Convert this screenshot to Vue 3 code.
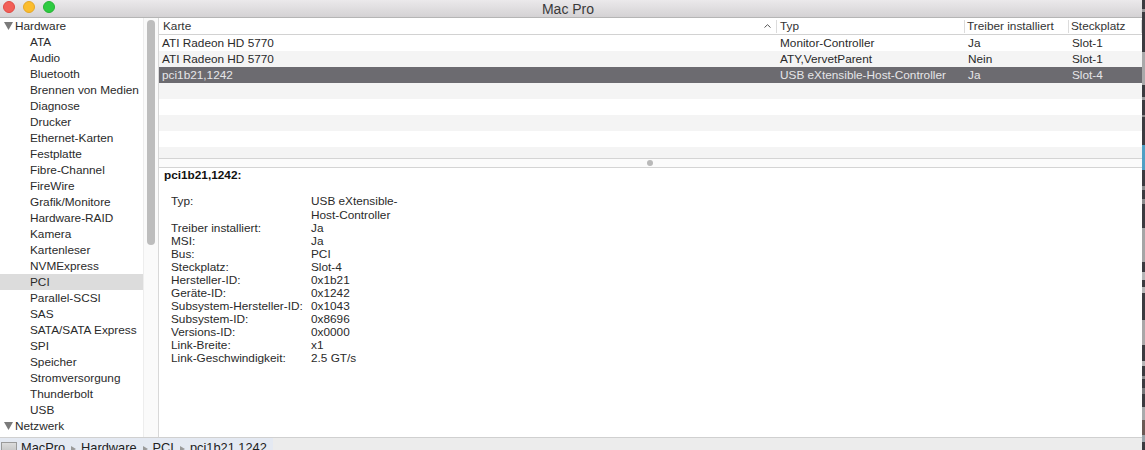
<script setup>
const sidebar = ['ATA','Audio','Bluetooth','Brennen von Medien','Diagnose','Drucker','Ethernet-Karten','Festplatte','Fibre-Channel','FireWire','Grafik/Monitore','Hardware-RAID','Kamera','Kartenleser','NVMExpress','PCI','Parallel-SCSI','SAS','SATA/SATA Express','SPI','Speicher','Stromversorgung','Thunderbolt','USB']
const rows = [
  ['ATI Radeon HD 5770','Monitor-Controller','Ja','Slot-1'],
  ['ATI Radeon HD 5770','ATY,VervetParent','Nein','Slot-1'],
  ['pci1b21,1242','USB eXtensible-Host-Controller','Ja','Slot-4'],
  ['','','',''],['','','',''],['','','',''],['','','',''],['','','','']
]
const details = [
  ['Typ:','USB eXtensible-Host-Controller'],['Treiber installiert:','Ja'],['MSI:','Ja'],['Bus:','PCI'],['Steckplatz:','Slot-4'],
  ['Hersteller-ID:','0x1b21'],['Geräte-ID:','0x1242'],['Subsystem-Hersteller-ID:','0x1043'],['Subsystem-ID:','0x8696'],
  ['Versions-ID:','0x0000'],['Link-Breite:','x1'],['Link-Geschwindigkeit:','2.5 GT/s']
]
const crumbs = ['MacPro','Hardware','PCI','pci1b21,1242']
</script>

<template>
  <div class="screen">
    <div class="window">
      <header class="titlebar">
        <div class="lights">
          <span class="light red"></span><span class="light yellow"></span><span class="light green"></span>
        </div>
        <span class="title">Mac Pro</span>
      </header>
      <div class="main">
        <aside class="sidebar">
          <div class="group"><svg class="tri" viewBox="0 0 9 8"><path d="M0 0H9L4.5 8Z"/></svg>Hardware</div>
          <div v-for="s in sidebar" :key="s" class="item" :class="{ active: s === 'PCI' }">{{ s }}</div>
          <div class="group"><svg class="tri" viewBox="0 0 9 8"><path d="M0 0H9L4.5 8Z"/></svg>Netzwerk</div>
        </aside>
        <div class="gutter"><div class="thumb"></div></div>
        <section class="content">
          <div class="thead">
            <div class="th c1">Karte<svg class="chev" viewBox="0 0 7 4"><path d="M0.5 3.5L3.5 0.7L6.5 3.5" fill="none" stroke="#555" stroke-width="1"/></svg></div>
            <div class="th c2">Typ</div>
            <div class="th c3">Treiber installiert</div>
            <div class="th c4">Steckplatz</div>
          </div>
          <div class="tbody">
            <div v-for="(r, i) in rows" :key="i" class="tr" :class="{ odd: i % 2 === 1, sel: i === 2 }">
              <div class="td c1">{{ r[0] }}</div>
              <div class="td c2">{{ r[1] }}</div>
              <div class="td c3">{{ r[2] }}</div>
              <div class="td c4">{{ r[3] }}</div>
            </div>
          </div>
          <div class="splitter"><span class="dot"></span></div>
          <div class="details">
            <div class="dtitle">pci1b21,1242:</div>
            <div class="dgrid">
              <template v-for="d in details" :key="d[0]">
                <div class="dl">{{ d[0] }}</div>
                <div class="dv">{{ d[1] }}</div>
              </template>
            </div>
          </div>
        </section>
      </div>
      <footer class="pathbar">
        <div class="path">
          <span class="disk"></span>
          <template v-for="(c, i) in crumbs" :key="c">
            <span v-if="i" class="sep"></span>
            <span class="crumb">{{ c }}</span>
          </template>
        </div>
      </footer>
    </div>
    <div class="strip"></div>
  </div>
</template>

<style>
html, body { margin: 0; background: #fff; }
</style>

<style scoped>
.screen {
  width: 1145px;
  height: 450px;
  display: flex;
  overflow: hidden;
  font-family: "Liberation Sans", Arial, sans-serif;
  font-size: 11.8px;
  color: #222;
}
.window {
  width: 1142px;
  height: 450px;
  display: flex;
  flex-direction: column;
  flex: none;
}
.strip {
  flex: 1;
  background: linear-gradient(to bottom,
    #3c3b40 0 9px, #9a9a9c 9px 12px, #3c3b40 12px 52px, #a9a9aa 52px 85px, #3c3b40 85px 97px, #9a9a9c 97px 100px,
    #3c3b40 100px 115px, #8a8a8c 115px 117px, #3c3b40 117px 145px, #4f9fc4 145px 170px,
    #3c3b40 170px 186px, #8a8a8c 186px 190px, #3c3b40 190px 199px, #8a8a8c 199px 204px,
    #3c3b40 204px 228px, #a5a5a6 228px 262px, #3c3b40 262px 272px, #b5b5b6 272px 280px, #3c3b40 280px 287px, #b5b5b6 287px 293px,
    #3c3b40 293px 320px, #a9a7a8 320px 345px,
    #3c3b40 345px 361px, #b5b5b6 361px 366px, #3c3b40 366px 376px, #8a8a8c 376px 379px, #3c3b40 379px 388px, #77777a 388px 394px,
    #3c3b40 394px 407px, #a8aaac 407px 420px, #6b5a55 420px 435px, #9aa4aa 435px 442px, #3c3b40 442px 450px);
}
.titlebar {
  height: 17px;
  flex: none;
  border-bottom: 1px solid #b5b5b5;
  background: linear-gradient(#ebe9eb, #d4d2d4);
  display: flex;
  align-items: center;
  justify-content: center;
  position: relative;
  padding-right: 6px;
}
.title { font-size: 14px; color: #3a3a3a; line-height: 14px; }
.lights {
  position: absolute;
  left: 3px;
  top: 1px;
  display: flex;
  gap: 8px;
}
.light { width: 12px; height: 12px; border-radius: 50%; box-sizing: border-box; }
.red { background: #f25f58; border: 1px solid #e04a44; }
.yellow { background: #fbbd2e; border: 1px solid #e5a727; }
.green { background: #2ecb41; border: 1px solid #25b335; }
.main { flex: 1; display: flex; min-height: 0; }
.sidebar {
  width: 143px;
  flex: none;
  overflow: hidden;
}
.group, .item { height: 16px; line-height: 16px; white-space: nowrap; color: #2a2a2a; }
.group { padding-left: 4px; display: flex; align-items: center; }
.tri { width: 9px; height: 8px; margin-right: 2px; fill: #7b7b7b; }
.item { padding-left: 30px; }
.item.active { background: #dcdcdc; }
.gutter {
  width: 16px;
  flex: none;
  box-sizing: border-box;
  background: #fafafa;
  border-left: 1px solid #ededed;
  border-right: 1px solid #d8d8d8;
  padding: 2px 0 0 3px;
}
.thumb { width: 8px; height: 225px; border-radius: 4px; background: #bdbdbd; }
.content { flex: 1; min-width: 0; display: flex; flex-direction: column; }
.thead { height: 16px; flex: none; display: flex; border-bottom: 1px solid #d2d2d2; }
.th {
  box-sizing: border-box;
  color: #333;
  position: relative;
  border-right: 1px solid #dcdcdc;
  height: 13px;
  margin-top: 2px;
  line-height: 13px;
  display: flex;
  align-items: center;
}
.chev { position: absolute; right: 5px; top: 4px; width: 7px; height: 4px; }
.c1 { width: 618px; padding-left: 4px; flex: none; }
.c2 { width: 188px; padding-left: 3px; flex: none; }
.c3 { width: 104px; padding-left: 2px; flex: none; }
.c4 { width: 73px; padding-left: 2px; flex: none; }
.tbody { flex: none; height: 123px; overflow: hidden; }
.tr { height: 16px; display: flex; }
.td { line-height: 16px; white-space: nowrap; color: #2a2a2a; box-sizing: border-box; }
.td.c1 { padding-left: 3px; }
.td.c2 { padding-left: 3px; }
.td.c3 { padding-left: 3px; }
.td.c4 { padding-left: 3px; }
.odd { background: #f4f4f4; }
.sel { background: #6c6b70; }
.sel .td { color: #e6e6e8; }
.splitter {
  height: 10px;
  flex: none;
  box-sizing: border-box;
  border-top: 1px solid #d4d4d4;
  border-bottom: 1px solid #d4d4d4;
  background: #fbfbfb;
  display: flex;
  align-items: center;
  justify-content: center;
  padding-right: 2px;
}
.dot { width: 6px; height: 6px; border-radius: 50%; background: #b9b9b9; }
.details { flex: 1; min-height: 0; padding: 1px 0 0 5px; }
.dtitle { font-weight: bold; line-height: 13px; color: #111; }
.dgrid {
  margin: 12px 0 0 7px;
  display: grid;
  grid-template-columns: 140px 90px;
  line-height: 13px;
}
.dl:nth-child(-n+2), .dv:nth-child(-n+2) { line-height: 14px; }
.dl, .dv { color: #2a2a2a; }
.dl { white-space: nowrap; }
.pathbar {
  height: 13px;
  box-sizing: border-box;
  flex: none;
  border-top: 1px solid #d0d0d0;
  background: #ececec;
  overflow: hidden;
}
.path {
  width: 273px;
  height: 20px;
  background: #e4e9f2;
  display: flex;
  align-items: flex-start;
  font-size: 12.8px;
  line-height: 15px;
  padding-top: 2px;
  box-sizing: border-box;
  color: #222;
}
.disk {
  width: 16px;
  height: 14px;
  margin: 2px 4px 0 1px;
  background: linear-gradient(#dcdcdc, #bcbcbc);
  border: 1px solid #9a9a9a;
  box-sizing: border-box;
  flex: none;
}
.sep {
  width: 0;
  height: 0;
  margin: 6px 5px 0 6px;
  border-left: 5px solid #9a9a9a;
  border-top: 3px solid transparent;
  border-bottom: 3px solid transparent;
  flex: none;
}
.crumb { white-space: nowrap; }
</style>
